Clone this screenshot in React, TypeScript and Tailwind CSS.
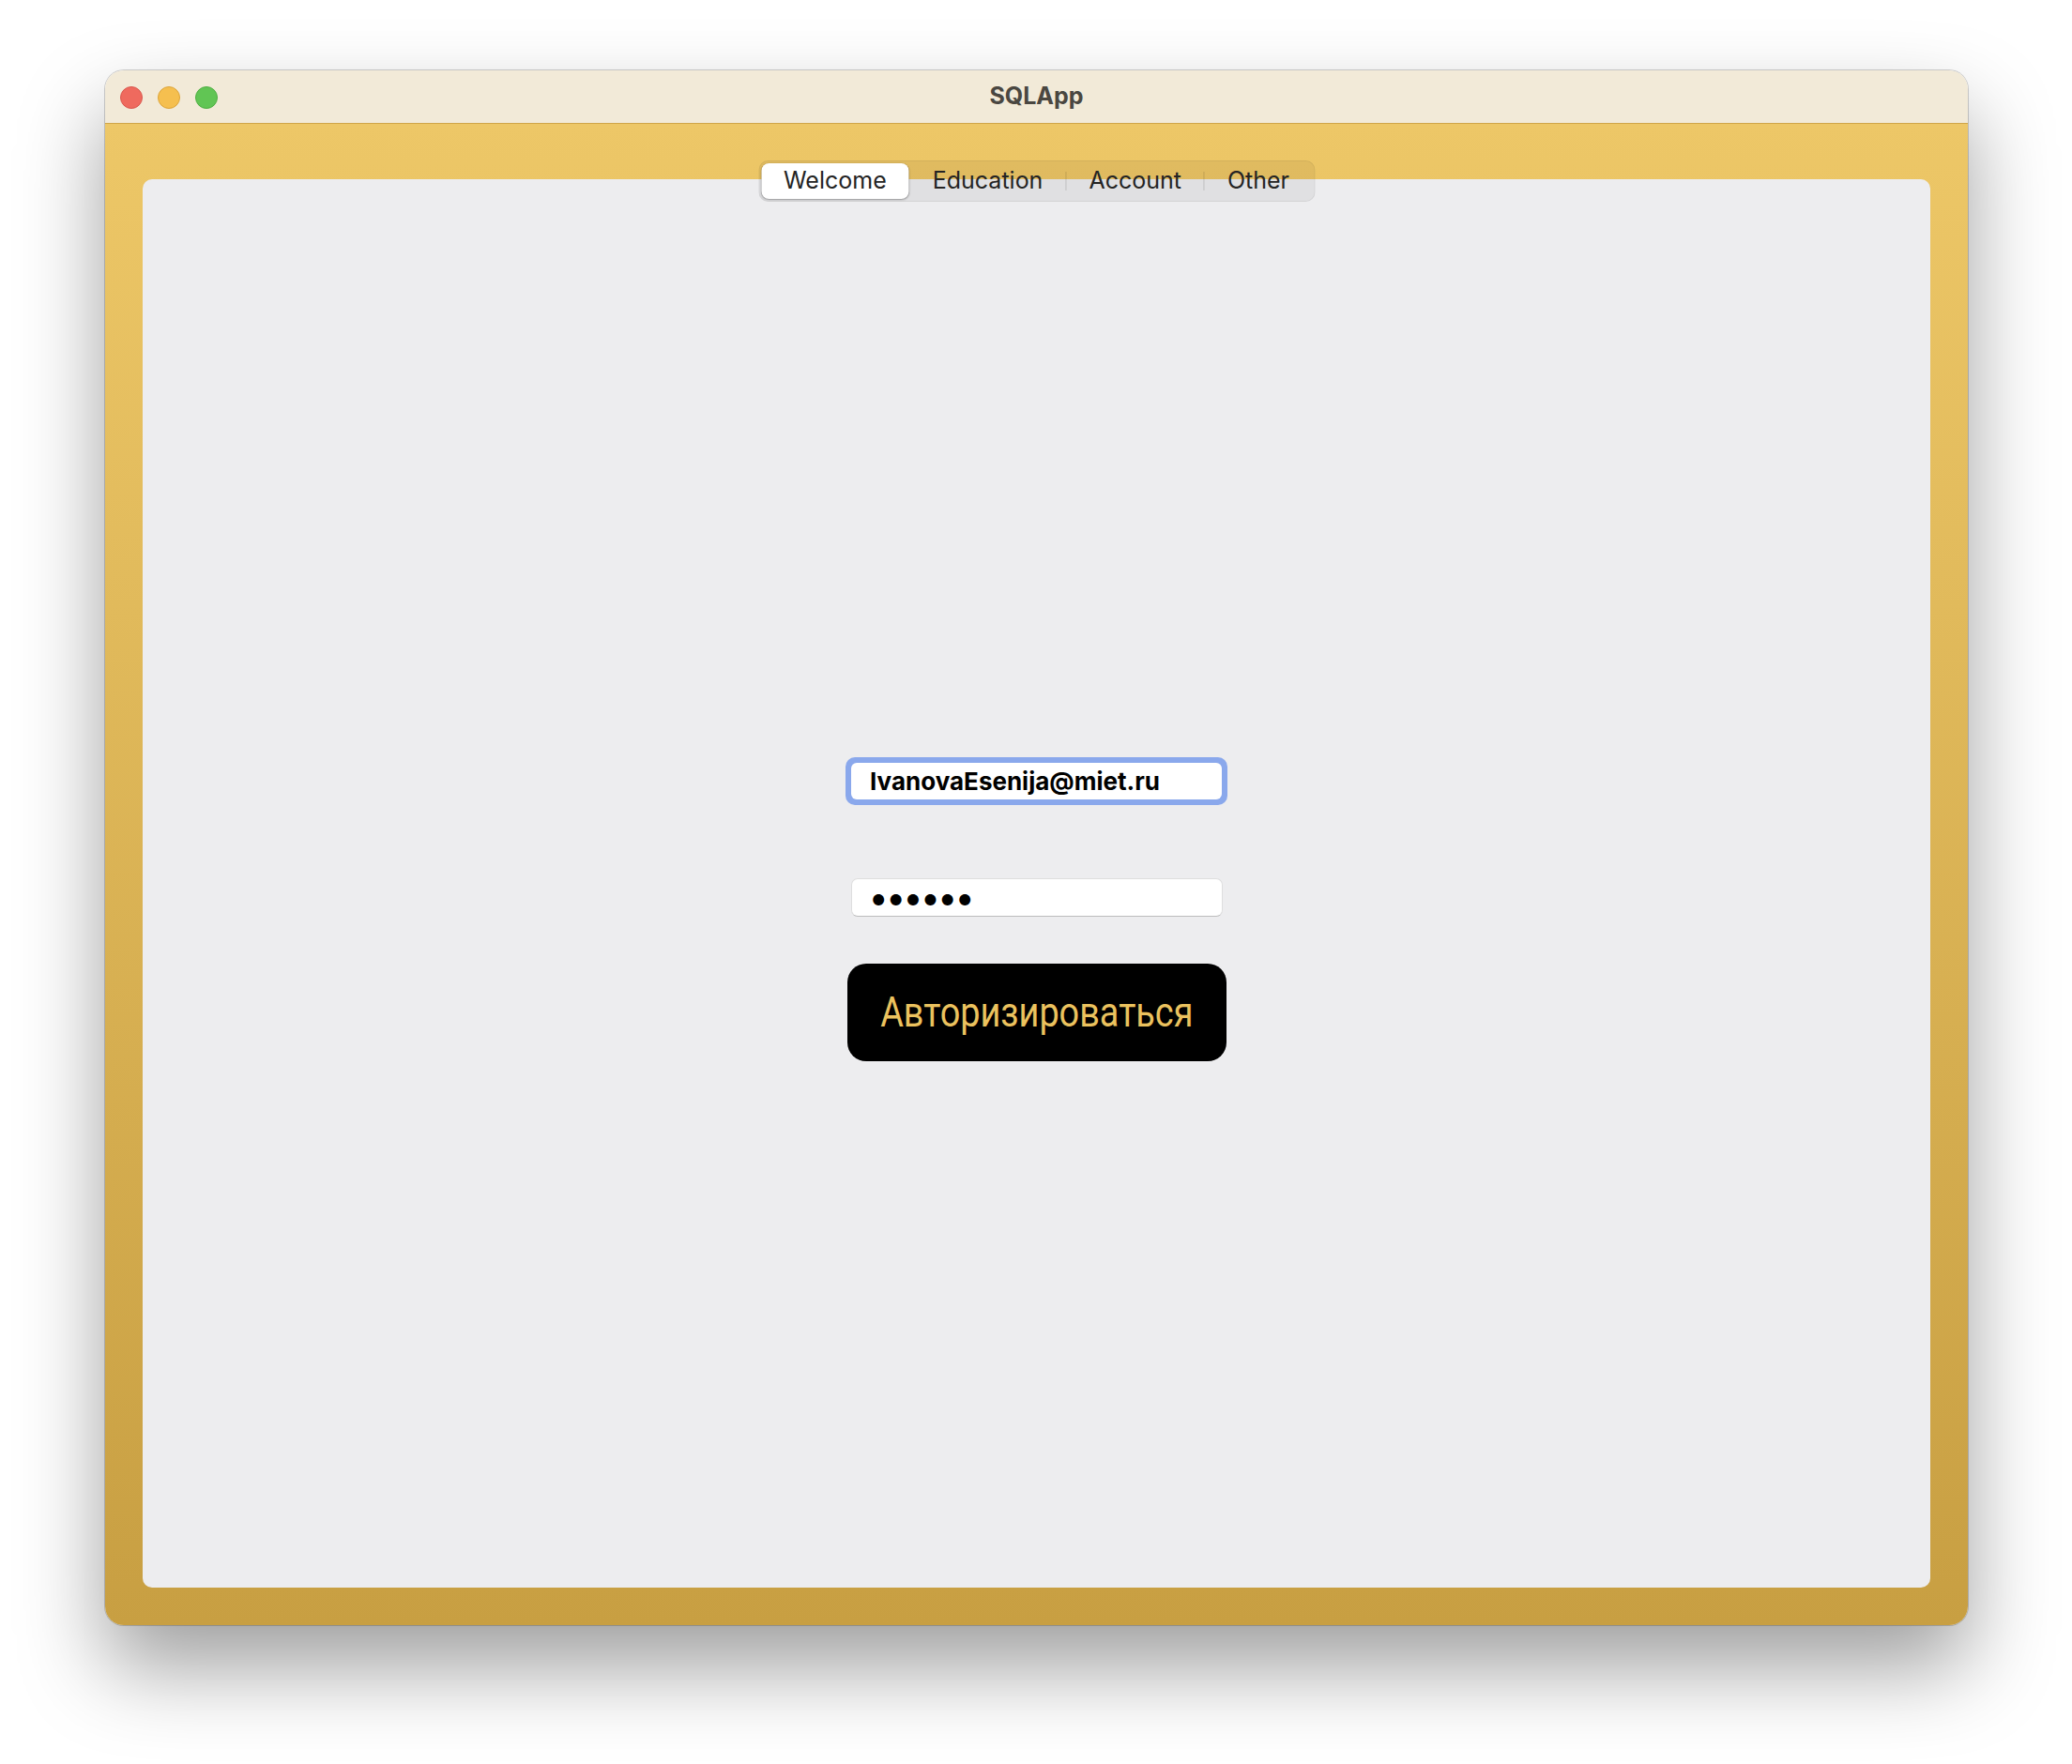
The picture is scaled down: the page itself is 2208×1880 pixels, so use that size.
import { useState } from "react";

const tabs = ["Welcome", "Education", "Account", "Other"];

function TrafficLights() {
  return (
    <div className="absolute left-[16px] top-[17px] flex gap-[16px]">
      <div className="h-[24px] w-[24px] rounded-full border border-[#d9574d] bg-[#ef6a5e]" />
      <div className="h-[24px] w-[24px] rounded-full border border-[#dca43a] bg-[#f5bf4f]" />
      <div className="h-[24px] w-[24px] rounded-full border border-[#4fae43] bg-[#61c554]" />
    </div>
  );
}

export default function App() {
  const [tab, setTab] = useState("Welcome");
  const [email, setEmail] = useState("IvanovaEsenija@miet.ru");
  const [password, setPassword] = useState("123456");

  return (
    <div
      className="min-h-[1880px] w-[2208px] bg-white pl-[112px] pt-[75px]"
      style={{ fontFamily: "Inter, 'Liberation Sans', sans-serif" }}
    >
      <div className="flex h-[1657px] w-[1985px] flex-col overflow-hidden rounded-[20px] shadow-[0_0_0_1px_rgba(0,0,0,0.18),0_45px_90px_rgba(0,0,0,0.38)]">
        {/* title bar */}
        <div className="relative flex h-[57px] shrink-0 items-center justify-center border-b border-[#cfa448] bg-[#f2ead8]">
          <TrafficLights />
          <span className="text-[25px] font-bold text-[#4a4741]">SQLApp</span>
        </div>

        {/* body */}
        <div className="flex flex-1 flex-col bg-gradient-to-b from-[#edc767] to-[#c89f42] px-[40px] pb-[40px] pt-[59px]">
          <div className="relative flex flex-1 flex-col items-center rounded-[10px] bg-[#ededef] pt-[616px]">
            {/* segmented control */}
            <div className="absolute left-1/2 top-[-20px] flex h-[44px] -translate-x-1/2 items-center rounded-[10px] border border-black/[0.06] bg-black/[0.05] p-[2px]">
              {tabs.map((t, i) => {
                const active = t === tab;
                const prevActive = i > 0 && tabs[i - 1] === tab;
                return (
                  <div key={t} className="flex h-full items-center">
                    {i > 0 && (
                      <div
                        className={`h-[20px] w-px ${active || prevActive ? "bg-transparent" : "bg-black/15"}`}
                      />
                    )}
                    <button
                      onClick={() => setTab(t)}
                      className={`flex h-full items-center rounded-[8px] px-[24px] text-[25px] text-[#242424] ${
                        active ? "bg-white shadow-[0_1px_2px_rgba(0,0,0,0.3),0_0_0_0.5px_rgba(0,0,0,0.08)]" : ""
                      }`}
                    >
                      {t}
                    </button>
                  </div>
                );
              })}
            </div>

            {/* login form */}
            <div className="rounded-[10px] bg-[#8aa8ec] p-[6px]">
              <input
                value={email}
                onChange={(e) => setEmail(e.target.value)}
                className="block h-[39px] w-[395px] rounded-[6px] bg-white px-[20px] text-[26px] font-bold text-black outline-none"
              />
            </div>

            <input
              type="password"
              value={password}
              onChange={(e) => setPassword(e.target.value)}
              className="mt-[78px] block h-[41px] w-[396px] rounded-[7px] border border-[#dedede] border-b-[#bdbdbd] bg-white px-[18px] text-[38px] tracking-[-3px] text-black outline-none"
            />

            <button className="mt-[50px] flex h-[104px] w-[404px] items-center justify-center rounded-[20px] bg-black">
              <span
                className="inline-block scale-x-[0.86] text-[44px] text-[#ebc25e]"
                style={{ fontFamily: "Roboto, 'Liberation Sans', sans-serif" }}
              >
                Авторизироваться
              </span>
            </button>
          </div>
        </div>
      </div>
    </div>
  );
}
